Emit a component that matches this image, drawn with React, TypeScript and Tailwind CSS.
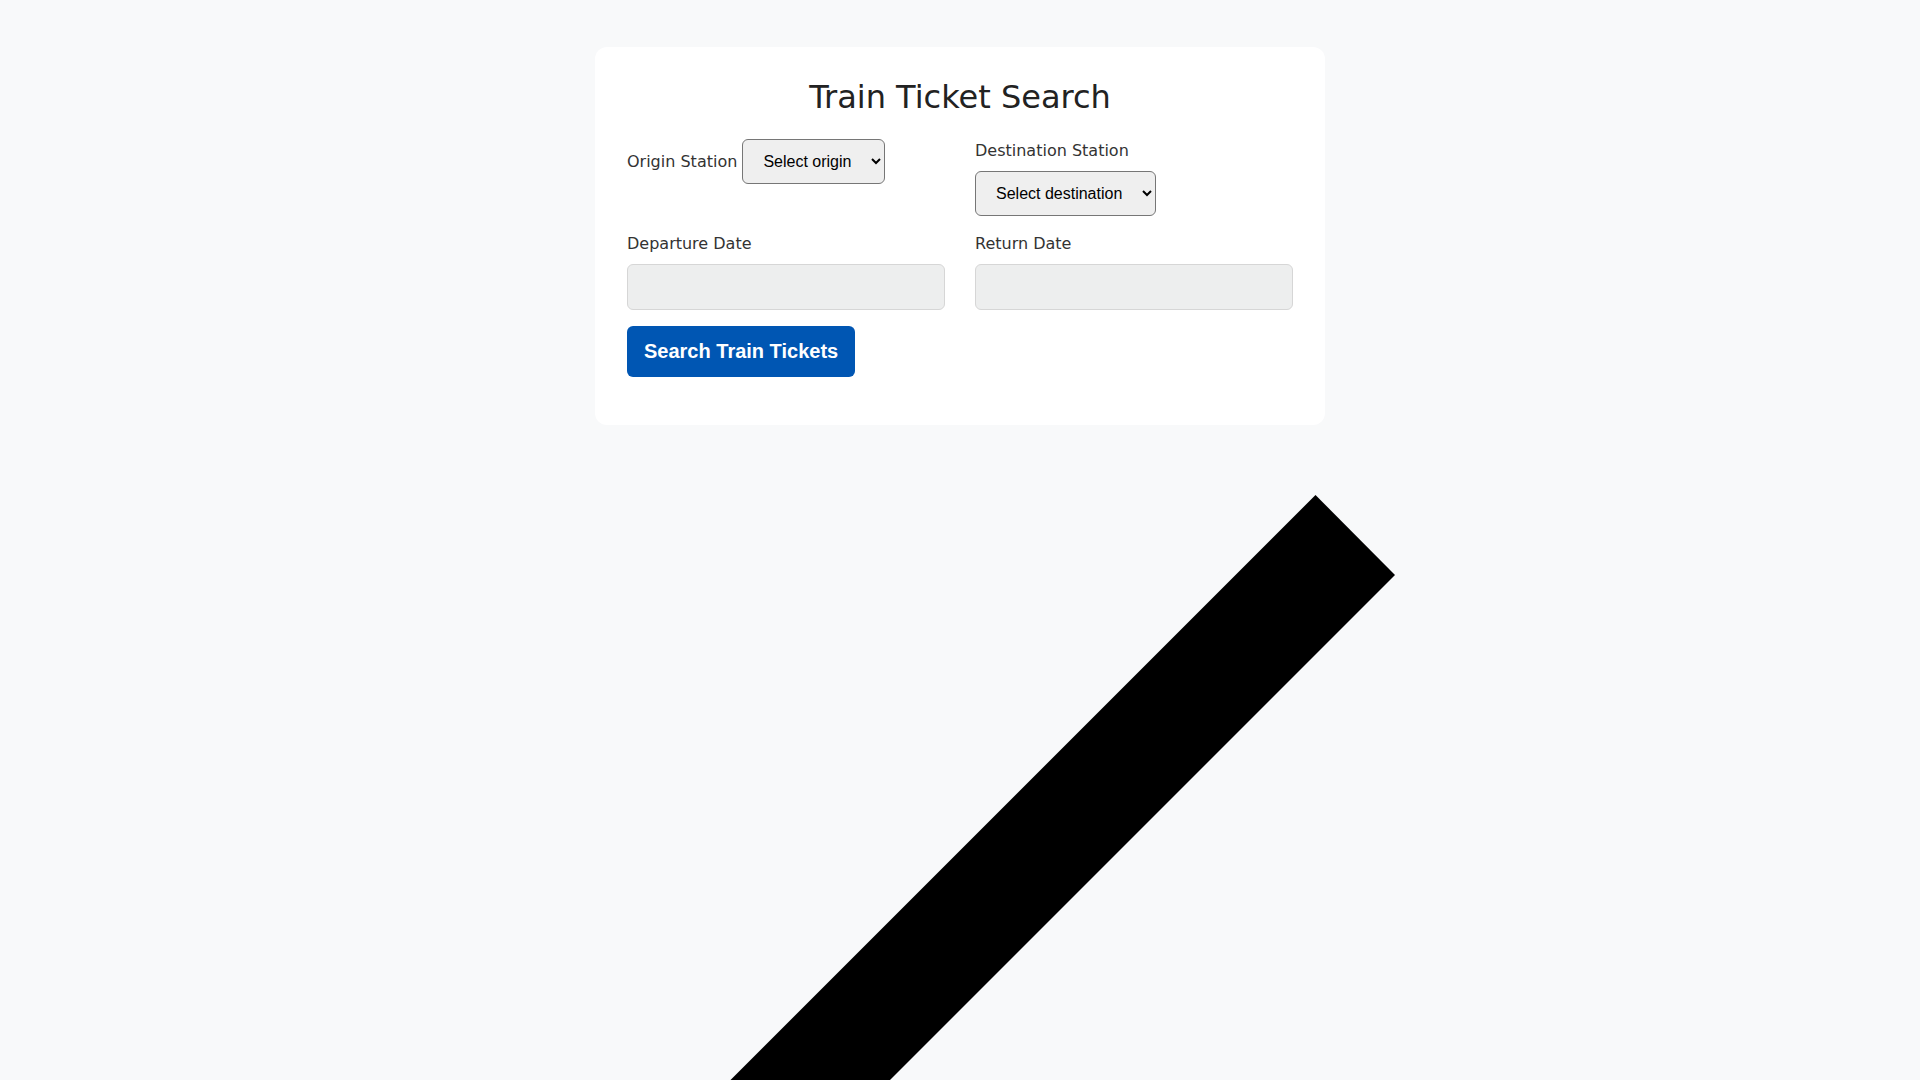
import React from 'react';

// Train ticket search form, plus the oversized stray glyph below it.

const LABEL = "inline-block mb-2 text-base leading-6 text-[#333] font-['DejaVu_Sans',sans-serif]";
const SELECT =
  "inline-block align-baseline py-3 px-4 border border-[#767676] rounded-[6px] bg-[#efefef] text-black text-base leading-[normal] font-['Liberation_Sans',Arial,sans-serif]";
const FIELD =
  'block w-full h-[46px] px-3 border border-[#d6d6d6] rounded-[6px] bg-[#edeeee] text-base outline-none';

const Stroke: React.FC = () => (
  <svg className="block" width="1920" height="656" viewBox="0 0 1920 656" aria-hidden="true">
    <polygon points="1315.5,70 1395,150 855,690 695.5,690" fill="#000" />
  </svg>
);

export default function App() {
  return (
    <div className="min-h-screen overflow-hidden bg-[#f8f9fa] font-['DejaVu_Sans',sans-serif] text-[#333]">
      <div className="mx-auto mt-[47px] w-[730px] rounded-xl bg-white px-8 pt-[31px] pb-8">
        <h1 className="mb-[23px] text-center text-[32px] leading-[normal] font-normal text-[#222]">
          Train Ticket Search
        </h1>
        <form onSubmit={(e) => e.preventDefault()}>
          <div className="grid grid-cols-2 gap-x-[30px]">
            <div className="mb-4">
              <label className={LABEL}>Origin Station</label>{' '}
              <select className={SELECT} defaultValue="">
                <option value="">Select origin</option>
              </select>
            </div>
            <div className="mb-4">
              <label className={LABEL}>Destination Station</label>{' '}
              <select className={SELECT} defaultValue="">
                <option value="">Select destination</option>
              </select>
            </div>
            <div className="mb-4">
              <label className={LABEL}>Departure Date</label>
              <input type="text" className={FIELD} />
            </div>
            <div className="mb-4">
              <label className={LABEL}>Return Date</label>
              <input type="text" className={FIELD} />
            </div>
          </div>
          <div className="mb-4">
            <button
              type="submit"
              className="rounded-[6px] bg-[#0056b3] px-[17px] py-[14px] text-[20px] leading-[23px] font-bold text-white font-['Liberation_Sans',Arial,sans-serif]"
            >
              Search Train Tickets
            </button>
          </div>
        </form>
      </div>
      <Stroke />
    </div>
  );
}
